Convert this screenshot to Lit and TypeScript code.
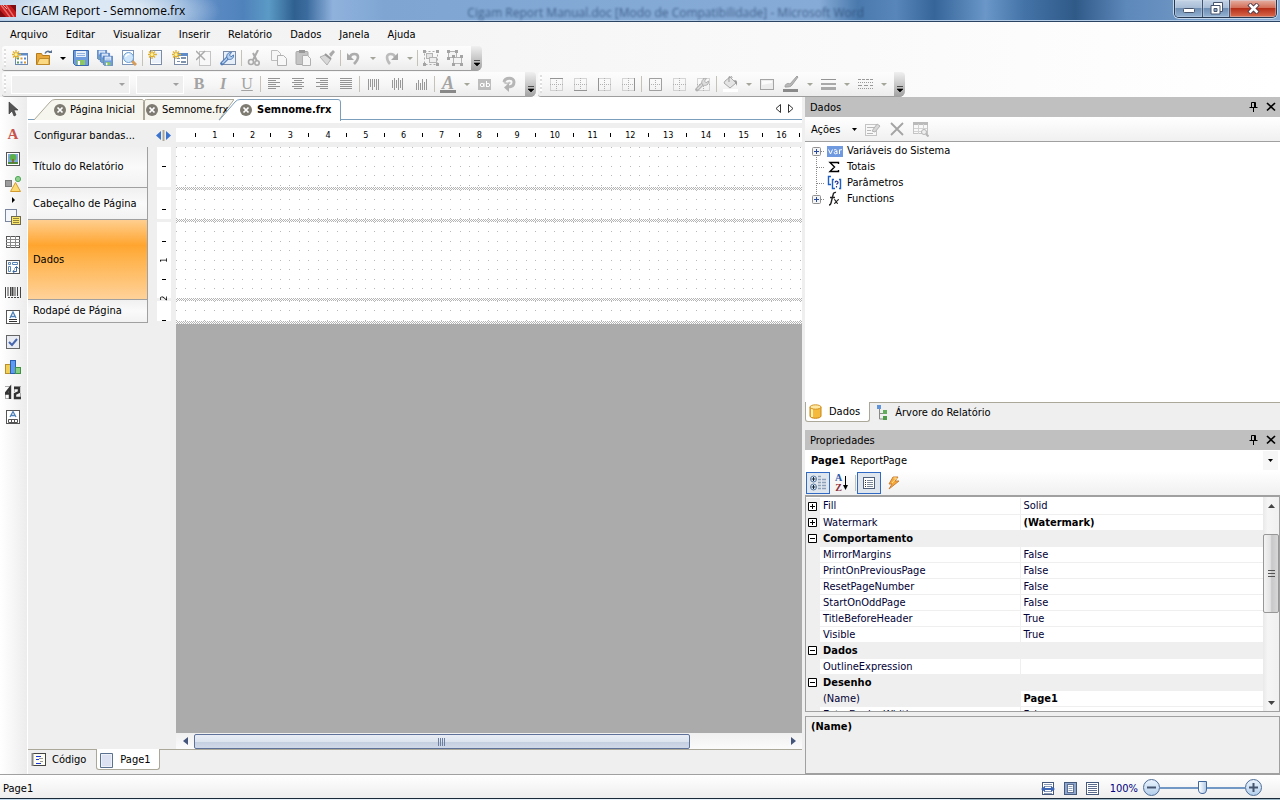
import { LitElement, html, css, svg, nothing } from "lit";
import { customElement, state } from "lit/decorators.js";

const star = svg`<path d="M4 0v9M0 4.500h9M1 1.500l6 6M7 1.500l-6 6" stroke="#e0b030" stroke-width="1.300"/><circle cx="4" cy="4.500" r="1.500" fill="#fff3a0"/>`;
const sheet = (x: number, y: number, w: number, h: number, c: string, f = "#fff") =>
  svg`<rect x=${x + 0.5} y=${y + 0.5} width=${w - 1} height=${h - 1} fill=${f} stroke=${c}/>`;
const lines = (d: string, c = "#949494", w = 1) => svg`<path d=${d} stroke=${c} stroke-width=${w} fill="none"/>`;
const G = "#b4b4b4";
const floppy = (x: number, y: number, s: number) => svg`<g transform="translate(${x} ${y}) scale(${s})">
  <path d="M.5.5h15v15h-13l-2-2z" fill="#6f9cdc" stroke="#3a68b0"/><rect x="3" y="1" width="10" height="6" fill="#e8f0fb"/>
  <path d="M4 3.500h8M4 5.500h8" stroke="#8fb2e2"/><rect x="4" y="10" width="8" height="5" fill="#8cc665"/><rect x="5" y="11" width="2" height="4" fill="#fff"/></g>`;
const dashedBox = svg`<path d="M2.500 2.500h12v12h-12zM8.500 2v13M2 8.500h13" stroke="#b0b0b0" stroke-dasharray="1 1" fill="none"/>`;
const wrench = (c1: string, c2: string) =>
  svg`<path d="M2 13.500L8 7.500" stroke=${c1} stroke-width="3.600" stroke-linecap="round"/><path d="M2.300 13.200L8.500 7" stroke=${c2} stroke-width="1.600"/><path d="M7 8c-1-3 1-6 4.500-5.500L9.500 5l1.500 1.800L13.500 5c.6 3.400-2.500 5-5 4.300z" fill=${c2} stroke=${c1}/>`;
const barTicks = (a: number[][]) => lines(a.map(([x, y1, y2]) => `M${x}.5 ${y1}V${y2}`).join(""), "#989898");

const ICONS: Record<string, unknown> = {
  newReport: svg`${sheet(3, 3, 13, 12, "#6d87b0")}<path d="M3 4.500h13" stroke="#5f8cc8" stroke-width="2"/><path d="M5 8.500h2M5 12.500h2" stroke="#54a060" stroke-width="2"/><path d="M8.500 8.500h2M12 12.500h2" stroke="#e09a30" stroke-width="2"/><path d="M12 8.500h2M8.500 12.500h2" stroke="#5a8ad0" stroke-width="2"/>${star}`,
  open: svg`<path d="M.5 14.500v-11h5l1 2h7v9z" fill="#e8a83c" stroke="#b47a1c"/><path d="M3.500 8.500h9.500v6H.8z" fill="#fbd983" stroke="#c08a28"/><path d="M9 3.500c1.500-3 4.500-2.500 5.500-1" stroke="#5b7390" fill="none" stroke-width="1.500"/><path d="M12 3h4V0z" fill="#5b7390"/>`,
  save: floppy(0, 0, 1),
  saveAll: svg`${floppy(0, 0, 0.62)}${floppy(3, 3, 0.62)}${floppy(6, 6, 0.62)}`,
  preview: svg`${sheet(1, 0, 12, 15, "#7b93b8")}<path d="M11 11l4 4" stroke="#d59c5a" stroke-width="3"/><circle cx="7.500" cy="7.500" r="5" fill="#cfe6fa" stroke="#6f9fd4"/><path d="M4.500 7a3 3 0 0 1 4-2.500" stroke="#fff" stroke-width="1.500" fill="none"/>`,
  newPage: svg`${sheet(2, 0, 12, 15, "#7b8ca8")}<rect x="4" y="2" width="9" height="11" fill="#eaf1fa"/>${star}`,
  newDialog: svg`${sheet(2, 3, 14, 12, "#7b8ca8")}<path d="M2 4.500h14" stroke="#5f8cc8" stroke-width="3"/><path d="M5 8.500h3M5 11.500h3" stroke="#7f92ac"/>${sheet(9, 7, 5, 2, "#7f92ac")}${sheet(9, 11, 5, 2, "#7f92ac")}${star}`,
  delPage: svg`${sheet(3, 1, 12, 15, "#c4c4c4", "#f8f8f8")}<path d="M0 1l9 9M9 1l-9 9" stroke="#aaa" stroke-width="1.500"/>`,
  pageSetup: svg`${sheet(3, 1, 13, 14, "#7b8ca8", "#e6eef8")}${wrench("#4f7ab4", "#b4cff0")}`,
  cut: svg`<path d="M11 0L6 10M6 3l4 8" stroke="#aaa" stroke-width="2"/><circle cx="4" cy="12" r="2.500" fill="none" stroke="#aaa" stroke-width="1.600"/><circle cx="10" cy="13" r="2.200" fill="none" stroke="#aaa" stroke-width="1.600"/>`,
  copy: svg`<path d="M.5.500h6l3 3v7h-9z" fill="#f7f7f7" stroke="#bdbdbd"/><path d="M6.500 5.500h6l3 3v7h-9z" fill="#f7f7f7" stroke="#b0b0b0"/>`,
  paste: svg`<rect x="1" y="1.500" width="12" height="13" rx="1" fill="#c4c4c4" stroke="#a8a8a8"/><rect x="4" y="0" width="6" height="3" fill="#999"/><path d="M7.500 5.500h5l3 3v7h-8z" fill="#f6f6f6" stroke="#b0b0b0"/>`,
  brush: svg`<path d="M10 4l4-4 2 2-4 5z" fill="#aaa"/><path d="M1 7l5-2 6 4-4 6z" fill="#d8d8d8" stroke="#b0b0b0"/><path d="M6 4l6 5" stroke="#999" stroke-width="2"/>`,
  undo: svg`<path d="M4 7c1-4 8-4 8 0 0 3-2 5-4 7" stroke="#acacac" stroke-width="2.600" fill="none"/><path d="M1 3v7h7z" fill="#a8a8a8"/>`,
  redo: svg`<path d="M12 7C11 3 4 3 4 7c0 3 1 5 3 7" stroke="#bcbcbc" stroke-width="2.600" fill="none"/><path d="M15 3v7H8z" fill="#a8a8a8"/>`,
  group: svg`${sheet(3, 3, 7, 6, G, "#e6e6e6")}${sheet(6, 7, 8, 6, G, "#eee")}<path d="M1.500 1.500h13v13h-13z" fill="none" stroke="#aaa" stroke-dasharray="2 2"/><path d="M0 0h3v3H0zM13 0h3v3h-3zM0 13h3v3H0zM13 13h3v3h-3z" fill="#a4a4a4"/>`,
  ungroup: svg`${sheet(1, 1, 9, 7, G, "#f4f4f4")}${sheet(6, 7, 9, 7, G, "#f4f4f4")}<path d="M0 0h3v3H0zM8 0h3v3H8zM0 7h3v3H0zM5 5h3v3H5zM13 5h3v3h-3zM5 13h3v3H5zM13 13h3v3h-3z" fill="#a4a4a4"/>`,
  left: lines("M2 2.500h12M2 4.500h8M2 6.500h12M2 8.500h8M2 10.500h12M2 12.500h8"),
  center: lines("M2 2.500h12M4 4.500h8M2 6.500h12M4 8.500h8M2 10.500h12M4 12.500h8"),
  right: lines("M2 2.500h12M6 4.500h8M2 6.500h12M6 8.500h8M2 10.500h12M6 12.500h8"),
  justify: lines("M2 2.500h12M2 4.500h12M2 6.500h12M2 8.500h12M2 10.500h12M2 12.500h12"),
  vTop: barTicks([[3, 3, 14], [5, 3, 11], [7, 3, 14], [9, 3, 11], [11, 3, 14], [13, 3, 14]]),
  vMid: barTicks([[3, 4, 12], [5, 2, 14], [7, 4, 12], [9, 2, 14], [11, 4, 12], [13, 2, 14]]),
  vBot: barTicks([[3, 7, 14], [5, 4, 14], [7, 7, 14], [9, 3, 14], [11, 6, 14], [13, 3, 14]]),
  highlight: svg`<rect x="1" y="3" width="13" height="11" fill="#bdbdbd"/><g stroke="#fff" fill="none"><circle cx="5" cy="9" r="1.700"/><path d="M7 7v4M9.500 5v6"/><circle cx="11" cy="9" r="1.700"/></g>`,
  rotate: svg`<path d="M3 6c1-5 10-5 10 0 0 4-3 5-6 5" stroke="#b6b6b6" stroke-width="3" fill="none"/><path d="M3 6c2 2 5 2 6 0" stroke="#c6c6c6" stroke-width="2" fill="none"/><path d="M8 7v9l-5-4.500z" fill="#b2b2b2"/>`,
  bTop: svg`${dashedBox}${lines("M2 2.500h13")}`,
  bBottom: svg`${dashedBox}${lines("M2 14.500h13")}`,
  bLeft: svg`${dashedBox}${lines("M2.500 2v13")}`,
  bRight: svg`${dashedBox}${lines("M14.500 2v13")}`,
  bAll: svg`${dashedBox}${lines("M2.500 2.500h12v12h-12z", "#a0a0a0")}`,
  bNone: dashedBox,
  bEdit: svg`${dashedBox}${wrench("#b0b0b0", "#dcdcdc")}`,
  fill: svg`<path d="M3 5l5-4 6 6-6 5-6-5z" fill="#e4e4e4" stroke="#a8a8a8"/><path d="M7 6V1c1-2 3-1 3 1" stroke="#999" fill="none"/><path d="M12 4c4 0 3 3 3 6z" fill="#999"/><rect x="1" y="13" width="15" height="3" fill="#fff"/>`,
  box: svg`<rect x="1.500" y="3.500" width="13" height="10" fill="#ececec" stroke="#a4a4a4"/><path d="M3 5h10v2L3 9z" fill="#fbfbfb"/>`,
  lineColor: svg`<path d="M2 11c0-4 4-4 5-3l7-8 1 1-6 8c-1 2-4 2-7 2z" fill="#b8b8b8" stroke="#a0a0a0"/><rect x="0" y="13" width="15" height="3" fill="#8a8a8a"/>`,
  lineWidth: svg`${lines("M1 3.500h15")}${lines("M1 8h15", "#a8a8a8", 2)}${lines("M1 12.500h15", "#a8a8a8", 3)}`,
  lineStyle: svg`<g stroke="#999" fill="none"><path d="M1 3.500h15" stroke-dasharray="3 1"/><path d="M1 6.500h15M1 12.500h15" stroke-dasharray="1 1"/><path d="M1 9.500h15" stroke-dasharray="4 2"/></g>`,
  pointer: svg`<path d="M4 1v12l3-3 2 5 2-1-2-5h4z" fill="#555" stroke="#333" stroke-width=".6"/>`,
  picture: svg`${sheet(1, 1, 14, 14, "#555")}<rect x="3" y="3" width="10" height="10" fill="#7fa8df"/><rect x="3" y="11" width="10" height="2" fill="#4c8a3e"/><circle cx="8" cy="6.500" r="3.400" fill="#5cb04a"/><path d="M8 8v4" stroke="#8a5a28" stroke-width="1.500"/>`,
  shapes: svg`<rect x="0.500" y="4.500" width="6" height="6" fill="#9c9c9c" stroke="#777"/><circle cx="13" cy="3" r="2.600" fill="#8fd08f" stroke="#4fa75a"/><path d="M10.500 6.500l5 9h-10z" fill="#fbdb72" stroke="#d39a30"/>`,
  subreport: svg`${sheet(0, 0, 12, 13, "#7a86a0", "#f3f6fb")}<rect x="6.500" y="7.500" width="9" height="8" fill="#fbe66c" stroke="#6d6850"/><path d="M8 9.500h6M8 11.500h6M8 13.500h6" stroke="#8f8440"/>`,
  table: svg`${sheet(1, 2, 14, 12, "#555")}<path d="M1 5.500h14M1 8.500h14M1 11.500h14M5.500 2v12M10.500 2v12" stroke="#8a8a8a"/>`,
  matrix: svg`${sheet(1, 1, 14, 14, "#555")}<path d="M3.500 3.500h2v2h-2zM7.500 3.500h5v2h-5zM3.500 7.500h2v5h-2z" fill="none" stroke="#5b86b8"/><path d="M8 12.500h3.500V8M9.500 10.500L8 12.500l1.500 2M9.500 9.500l2-2 2 2" fill="none" stroke="#39699f"/>`,
  barcode: svg`<path d="M.5 3v11M3 3v9M5.500 3v9M10 3v9M12.500 3v9M15.500 3v11" stroke="#444"/><path d="M7.500 3v9" stroke="#444" stroke-width="2"/><path d="M3 13.500h11" stroke="#444" stroke-dasharray="2 1"/>`,
  richtext: svg`${sheet(1, 1, 14, 14, "#555")}<path d="M5 9l3-6 3 6M6 7.500h4" stroke="#5082b8" fill="none" stroke-width="1.300"/><path d="M4 10.500h8M4 12.500h8" stroke="#333"/>`,
  check: svg`${sheet(1, 1, 14, 14, "#666", "#e9edf3")}<path d="M4 8l3 3 5-6" stroke="#4766ad" stroke-width="2" fill="none"/>`,
  chart: svg`<rect x=".5" y="5.500" width="5" height="9" fill="#f4cf55" stroke="#b8902a"/><rect x="5.500" y="1.500" width="5" height="13" fill="#5d9af0" stroke="#2a5fb4"/><rect x="10.500" y="8.500" width="5" height="6" fill="#86cf80" stroke="#3f8f45"/>`,
  digits: svg`<path d="M0 2.500h6M0 14.500h6M9 2.500h7M9 14.500h7M.5 9v6M9.500 3v5M15.500 9v5" stroke="#aaa"/><path d="M0 9.500h6M1 9l4-5v11" stroke="#333" stroke-width="2.400" fill="none"/><path d="M9 4h5v4l-4 2v4h6" stroke="#333" stroke-width="2.400" fill="none"/>`,
  cells: svg`${sheet(1, 1, 14, 14, "#555")}<path d="M5 8l3-5.500L11 8M6 6.500h4" stroke="#5082b8" fill="none" stroke-width="1.300"/><path d="M3.500 10.500h9v3h-9zM6.500 10v4M9.500 10v4" fill="none" stroke="#555"/>`,
  edit: svg`${sheet(0, 3, 12, 12, "#c4c4c4", "#f8f8f8")}<path d="M2 6.500h7M2 9.500h4M2 12.500h6" stroke="#b8b8b8"/><path d="M7 10l5-7 3 2-5 6z" fill="#d8d8d8" stroke="#b4b4b4"/>`,
  remove: svg`<path d="M2 2l12 12M14 2L2 14" stroke="#a4a4a4" stroke-width="1.800"/>`,
  viewData: svg`${sheet(0, 1, 15, 12, "#c4c4c4", "#f8f8f8")}<path d="M0 2.500h15" stroke="#bababa" stroke-width="3"/><path d="M1 7.500h13M1 10.500h13M5.500 3v10M10.500 3v10" stroke="#d2d2d2"/><circle cx="11" cy="11" r="2.500" fill="#eee" stroke="#b4b4b4"/><path d="M13 13l2.500 2.500" stroke="#b4b4b4" stroke-width="2"/>`,
  db: svg`<path d="M2 3v9c0 3 11 3 11 0V3z" fill="#f5b93c" stroke="#c78514"/><path d="M4 5v8" stroke="#fff0b8" stroke-width="2"/><ellipse cx="7.500" cy="3" rx="5.500" ry="2.200" fill="#fde7a2" stroke="#d29426"/>`,
  treeIcon: svg`<path d="M3.500 4v10H8M3.500 8.500H8" stroke="#888" fill="none"/><rect x="1" y="0" width="4" height="4" fill="#5f93dc"/><rect x="7" y="5" width="4" height="4" fill="#5fae5a"/><rect x="7" y="11" width="4" height="4" fill="#4d9c48"/>`,
  categ: svg`<g fill="#dfeaf8" stroke="#55759c"><circle cx="3.500" cy="4" r="3"/><circle cx="3.500" cy="12" r="3"/></g><path d="M1.500 4h4M3.500 2v4M1.500 12h4M3.500 10v4" stroke="#123"/><path d="M8 1.500h3M8 4.500h3M8 7.500h3M8 10.500h3M8 13.500h3M12 4.500h4M12 7.500h4M12 10.500h4M12 13.500h4" stroke="#8da0b8" stroke-width="1.400"/>`,
  props: svg`${sheet(2, 2, 12, 12, "#4f5f7a")}<path d="M4 5.500h1M4 7.500h1M4 9.500h1M4 11.500h1" stroke="#333"/><path d="M6 5.500h6M6 7.500h6M6 9.500h6M6 11.500h6" stroke="#7c8798"/>`,
  bolt: svg`<path d="M8 2h5l-3 4h4L4 14l3-5H4z" fill="#f8a83a" stroke="#c8803a"/><path d="M8.500 3h3L7 8" stroke="#ffe08a" fill="none"/>`,
  code: svg`${sheet(1, 1, 14, 13, "#444", "#fdfdf4")}<path d="M1.500 1v13" stroke="#888" stroke-width="2"/><path d="M5 4.500h5M5 7.500h3M5 11.500h5" stroke="#1a35d8"/><path d="M8 6.500h4M9 9.500h3" stroke="#999"/>`,
  page: svg`<path d="M1.500 1.500h12v14h-12z" fill="#eef1f8" stroke="#5b7190"/><path d="M3 3h9v11H3z" fill="#dce2f1"/>`,
  fitWidth: svg`${sheet(2, 2, 12, 13, "#45597c")}<path d="M4 4.500h8M4 6.500h8M4 11.500h8M4 13.500h8" stroke="#8b9bb5"/><path d="M1 9l4-3v2h6V6l4 3-4 3v-2H5v2z" fill="#3d67b6"/>`,
  wholePage: svg`${sheet(2, 2, 13, 13, "#45597c", "#8fa7cc")}${sheet(5, 4, 7, 9, "#5d7091")}<path d="M6.500 6.500h4M6.500 8.500h4M6.500 10.500h4" stroke="#90a0b8"/>`,
  fullSize: svg`${sheet(2, 2, 13, 13, "#45597c")}<path d="M4 4.500h9M4 6.500h9M4 8.500h9M4 10.500h9M4 12.500h9" stroke="#5b6c8c"/>`,
  closeTab: svg`<circle cx="8" cy="8" r="6" fill="#7e7b72"/><path d="M5.500 5.500l5 5M10.500 5.500l-5 5" stroke="#fff" stroke-width="1.700"/>`,
  pin: svg`<path d="M6.500 3.500h4v5h-4zM4.500 8.500h8M8.500 9v4" stroke="#000" fill="none"/><path d="M9.500 4v4" stroke="#000"/>`,
  close: svg`<path d="M4 4l8 7.500M12 4L4 11.500" stroke="#000" stroke-width="1.700"/>`,
  sigma: svg`<path d="M11.500 5V3.500H3L7.500 8 3 12.500h8.500V11" stroke="#000" stroke-width="1.400" fill="none"/>`,
  param: svg`<path d="M4 1.500H1.500v8H4M7 4.500H5.500v9H8M12 4.500h1.500v9H12" stroke="#1d5fc4" stroke-width="1.400" fill="none"/><path d="M8 7.500c.5-2 3.500-1.500 3 .5L9.500 9.500M9.500 11v1.500" stroke="#28348c" stroke-width="1.200" fill="none"/>`,
  fx: svg`<path d="M2 14c2 0 2-2 2.500-4L6 4c.4-2 1.500-3 3-2.500M3 6.500h5" stroke="#222" stroke-width="1.400" fill="none"/><path d="M7 8.500c2 0 2 4 4 4M12 8.500c-2 0-3 4-5 4" stroke="#222" stroke-width="1.200" fill="none"/>`,
  variable: svg`<rect x="0" y="3" width="16" height="11" fill="#6f9ae0"/><path d="M1.500 6.500L3.500 11l2-4.500M7 7c3-1 3 0 3 4M10 8.500c-3-.5-3.500 2-2 2.300 1 .2 2-.3 2-1M12.500 11V6.500M12.500 8c.5-1.500 1.500-1.500 2.500-1.200" stroke="#fff" fill="none"/>`,
};

const icon = (n: string) => html`<svg class="ic" width="16" height="16" viewBox="0 0 16 16" fill="none" aria-hidden="true">${ICONS[n]}</svg>`;

const base = css`
  * { box-sizing: border-box; }
  button { font: inherit; color: inherit; border: 0; background: none; padding: 0; margin: 0; display: flex; align-items: center; justify-content: center; white-space: nowrap; }
  .ic { display: block; flex: none; }
`;

type Item = [string, string?];

@customElement("tool-strip")
class ToolStrip extends LitElement {
  static properties = { items: { attribute: false } };
  declare items: Item[];
  static styles = [base, css`
    :host { display: flex; height: 25px; align-items: center; background: linear-gradient(#fdfdfd, #f7f7f7 50%, #ececec); border-bottom: 1px solid #9d9d9d; border-radius: 3px 6px 6px 3px; }
    .grip { width: 2px; height: 18px; margin: 0 2px; background: repeating-linear-gradient(#dedede 0 2px, #fff 2px 4px); }
    .btn { width: 24px; height: 22px; }
    .drop { width: 13px; height: 22px; }
    .sep { width: 1px; height: 16px; margin: 0 1px; background: #c5c2b8; }
    .cap { width: 11px; height: 25px; margin-left: 4px; background: linear-gradient(#f0f0f0, #a0a0a0); border-radius: 0 4px 6px 0; align-items: flex-end; padding-bottom: 5px; }
    .combo { appearance: none; height: 19px; margin: 0 3px; border: 1px solid #fff; border-radius: 0; background: #efefef; font: inherit; opacity: 1; }
    .wide { width: 119px; } .narrow { width: 48px; }
    .holder { display: grid; align-items: center; }
    .holder > * { grid-area: 1 / 1; }
    .holder svg { justify-self: end; margin-right: 8px; }
    .glyph { font: bold 16px "Liberation Serif", serif; color: #a3a3a3; line-height: 16px; }
    .italic { font-style: italic; } .under { text-decoration: underline; font-weight: normal; }
    .color { font-style: italic; border-bottom: 3px solid #888; width: 16px; text-align: center; line-height: 14px; font-size: 18px; }
  `];
  one([k, v]: Item) {
    const tri = (c: string) => html`<svg width="6" height="3" viewBox="0 0 6 3"><path d="M0 0h6L3 3z" fill=${c} /></svg>`;
    if (k === "sep") return html`<span class="sep"></span>`;
    if (k === "drop") return html`<button class="drop" aria-label="Mais opções">${tri(v ?? "#a5a59a")}</button>`;
    if (k === "combo") return html`<span class="holder"><select class="combo ${v!}" aria-label=${v === "wide" ? "Fonte" : "Tamanho"} disabled></select>${tri("#a0a0a0")}</span>`;
    if (k === "glyph") return html`<button class="btn"><span class="glyph ${v!}">${v === "bold" ? "B" : v === "italic" ? "I" : v === "under" ? "U" : "A"}</span></button>`;
    return html`<button class="btn" aria-label=${k}>${icon(k)}</button>`;
  }
  render() {
    return html`<span class="grip"></span>${this.items.map((i) => this.one(i))}
      <button class="cap" aria-label="Opções da barra"><svg width="6" height="6" viewBox="0 0 6 6"><path d="M0 .5h6M0 3h6L3 6z" stroke="#000" stroke-width=".6" /></svg></button>`;
  }
}

const l = (s: string): Item[] => s.split(" ").map((t) => t.split(":") as unknown as Item);
const STANDARD = l("newReport open drop:#000 save saveAll preview sep newPage newDialog delPage pageSetup sep cut copy paste brush sep undo drop redo drop sep group ungroup");
const TEXT = l("combo:wide combo:narrow glyph:bold glyph:italic glyph:under sep left center right justify sep vTop vMid vBot sep glyph:color drop highlight rotate");
const BORDER = l("bTop bBottom bLeft bRight sep bAll bNone bEdit sep fill drop box lineColor drop lineWidth drop lineStyle drop");
const MENU = ["Arquivo", "Editar", "Visualizar", "Inserir", "Relatório", "Dados", "Janela", "Ajuda"];
const SIDE = ["pointer", "text", "picture", "shapes", "more", "subreport", "table", "matrix", "barcode", "richtext", "check", "chart", "digits", "cells"];
const BANDS = [
  { name: "Título do Relatório", cls: "b1", marks: 0 },
  { name: "Cabeçalho de Página", cls: "b2", marks: 0 },
  { name: "Dados", cls: "b3", marks: 2 },
  { name: "Rodapé de Página", cls: "b4", marks: 0 },
];
const PROPS: [string, string, string][] = [
  ["plus", "Fill", "Solid"], ["plus", "Watermark", "(Watermark)"], ["group", "Comportamento", ""],
  ["", "MirrorMargins", "False"], ["", "PrintOnPreviousPage", "False"], ["", "ResetPageNumber", "False"],
  ["", "StartOnOddPage", "False"], ["", "TitleBeforeHeader", "True"], ["", "Visible", "True"],
  ["group", "Dados", ""], ["", "OutlineExpression", ""], ["group", "Desenho", ""],
  ["sel", "(Name)", "Page1"], ["", "ExtraDesignWidth", "False"],
];
const TREE: [string, string, boolean][] = [["variable", "Variáveis do Sistema", true], ["sigma", "Totais", false], ["param", "Parâmetros", false], ["fx", "Functions", true]];
const dots = Array.from({ length: 20 }, (_, i) => Math.round(i * 9.45));
const CHROME_WIDTH = 654;
const PX_PER_CM = 96 / 2.54;

@customElement("app-root")
class AppRoot extends LitElement {
  @state() selected = "Dados";
  @state() centimetres = 0;
  static styles = [base, css`
    :host { display: flex; flex-direction: column; height: 100vh; overflow: hidden; background: #efefef; color: #000; font: 11px/16px "DejaVu Sans Condensed", "DejaVu Sans", sans-serif; cursor: default; }
    .title { flex: none; display: flex; height: 22px; align-items: flex-start; border-bottom: 1px solid #2c4464; box-shadow: inset 0 -1px #b4cbe6;
      background: radial-gradient(ellipse 130px 34px at 90px 11px, #dce8f4 0 40%, #dce8f400 100%), linear-gradient(90deg, #a9c2e0, #84abd8 13%, #5a89c2 17%, #4f82bb 19%, #5b9ac6 21%, #2f608f 23%, #3c6c9f 24%, #8fb2dc 26%, #7fa6d3 30%, #86abd6 64%, #4a79ad 67%, #5886ba 70%, #36659a 73%, #6a97c8 77%, #4473a8 80%, #2f5a88 84%, #5d88ba 88%, #89acd4); }
    .logo { margin-top: 5px; }
    .caption { font: 12px/20px "Open Sans", "Noto Sans", sans-serif; margin-left: 5px; padding-top: 1px; white-space: nowrap; }
    .ghost { flex: 1; text-align: center; font: 12px/20px "Open Sans", "Noto Sans", sans-serif; padding-top: 3px; padding-right: 28px; color: #24436c; filter: blur(1px); opacity: .7; white-space: nowrap; overflow: hidden; }
    .winbtns { display: flex; margin-right: 3px; border: 1px solid #26384f; border-top: 0; border-radius: 0 0 5px 5px; overflow: hidden; box-shadow: 0 0 0 1px #c5d8ec; }
    .winbtns button { width: 28px; height: 17px; background: linear-gradient(#c3d3e6, #a8bdd6 45%, #6f8fb4 50%, #93b2d3); border-right: 1px solid #40546f; box-shadow: inset 0 0 0 1px #d5e2f066; }
    .winbtns .max { width: 27px; }
    .winbtns .x { width: 46px; border: 0; background: linear-gradient(#e6b0a2, #d3705a 45%, #b62f19 50%, #d96a4c); }
    .top { flex: none; background: linear-gradient(90deg, #f0f0f0, #fff); }
    .menu { display: flex; height: 24px; align-items: center; padding-left: 2px; }
    .menu button { padding: 2px 8px 0; margin-right: 2px; height: 20px; }
    .strips { display: flex; gap: 2px; padding-left: 2px; }
    .strips + .strips { margin-top: 1px; }
    .main { flex: 1; min-height: 0; display: grid; grid-template-columns: 28px minmax(0, 1fr) 475px; border-bottom: 1px solid #a0a0a0; }
    .side { background: linear-gradient(90deg, #fff, #f6f6f6 50%, #ececec); border-right: 1px solid #fff; }
    .side button { width: 26px; height: 25px; }
    .side button:first-child { height: 24px; }
    .side .more { height: 8px; }
    .serifA { font: bold 15px/16px "Liberation Serif", serif; color: #c8524c; }
    .center { display: flex; flex-direction: column; min-width: 0; border-right: 3px solid #efefef; }
    .tabs { flex: none; display: flex; height: 23px; padding: 2px 8px 0 6px; background: #fff; border-bottom: 1px solid #7b9ebd; }
    .tab { position: relative; height: 21px; justify-content: flex-start; isolation: isolate; }
    .tab > .shape { position: absolute; inset: 0; z-index: -1; }
    .tab > span { padding-top: 1px; }
    .t1 { width: 110px; padding-left: 18px; gap: 2px; } .t2 { width: 90px; gap: 2px; } .t3 { width: 122px; margin-left: -15px; padding-left: 19px; gap: 3px; font-weight: bold; }
    .arrows { margin-left: auto; display: flex; gap: 7px; align-items: center; height: 18px; }
    .under-tabs { flex: none; height: 3px; background: #fff; }
    .head { flex: none; display: flex; height: 24px; align-items: center; }
    .config { width: 128px; justify-content: flex-start; padding: 1px 0 0 6px; }
    .split { width: 15px; }
    .ruler { flex: 1; min-width: 0; margin-left: 5px; height: 14px; background: #fff; display: flex; overflow: hidden; padding-left: 0.5cm; font-size: 9px; line-height: 14px; }
    .cm { flex: none; width: 1cm; height: 14px; display: flex; align-items: center; }
    .cm::before { content: ""; width: 1px; height: 4px; background: #000; }
    .cm span { flex: 1; text-align: center; padding-left: 1px; }
    .work { flex: 1; min-height: 0; display: grid; grid-template-columns: 120px 9px 14px 5px minmax(0, 1fr); }
    .band { width: 100%; justify-content: flex-start; padding-left: 5px; border-right: 1px solid #a0a0a0; border-bottom: 1px solid #a0a0a0; background: linear-gradient(#f0f0f0, #fafafa 50%, #f2f2f2); }
    .band.b1 { height: 41px; } .band.b2 { height: 32px; } .band.b3 { height: 80px; } .band.b4 { height: 23px; }
    .band.on { background: linear-gradient(#ffcf90, #ffa52f 32%, #ffb045 45%, #ffd29a); }
    .vr { grid-column: 3; }
    .seg { border-bottom: 3px solid #efefef; background: #fff; padding-top: 0.5cm; }
    .vcm { height: 1cm; display: flex; flex-direction: column; align-items: center; font-size: 9px; }
    .vcm::before { content: ""; width: 4px; height: 1px; background: #000; flex: none; }
    .vcm span { flex: 1; writing-mode: vertical-rl; transform: rotate(180deg); line-height: 12px; text-align: center; }
    .r.b1 { height: 43px; } .r.b2 { height: 32px; } .r.b3 { height: 79px; } .r.b4 { height: 23px; }
    .canvas { grid-column: 5; background: #ababab; display: flex; flex-direction: column; min-width: 0; }
    .area { display: flex; flex-direction: column; background: #fff; }
    .area svg { flex: 1; width: 100%; min-height: 0; display: block; }
    .area::after { content: ""; height: 3px; background: repeating-conic-gradient(#b4b4b4 0 25%, #fff 0 50%) 0 0 / 2px 2px; }
    .hscroll { margin-top: auto; height: 16px; display: flex; align-items: center; background: linear-gradient(#f0f0f0, #fbfbfb); }
    .hscroll .arrow { width: 18px; height: 16px; }
    .htrack { flex: 1; height: 16px; }
    .hthumb { width: 84%; height: 15px; margin-top: 1px; border: 1px solid #5d7199; border-radius: 2px; background: linear-gradient(#e8edf5, #dde4ee 50%, #c3cedf 52%, #d0d9e8); display: grid; place-items: center; }
    .pages { flex: none; display: flex; height: 25px; border-top: 1px solid #aca899; }
    .pages button { gap: 5px; height: 21px; margin-top: -1px; padding: 1px 10px 0 3px; }
    .pages .on { background: #fff; border: 1px solid #aca899; border-top: 0; border-radius: 0 0 3px 3px; padding: 1px 8px 0 2px; }
    .right { display: flex; flex-direction: column; min-width: 0; min-height: 0; }
    .phead { flex: none; display: flex; align-items: center; height: 20px; background: #c0c0c0; padding-left: 5px; }
    .phead span { flex: 1; padding-top: 1px; }
    .phead button { width: 18px; }
    .ptools { flex: none; display: flex; height: 25px; align-items: center; background: linear-gradient(#fff, #f0f0f0); border-bottom: 1px solid #a0a0a0; padding-left: 6px; }
    .ptools button { width: 24px; height: 22px; }
    .ptools .acts { width: auto; gap: 12px; margin-right: 4px; padding-top: 1px; }
    .tree { flex: none; list-style: none; margin: 0; padding: 1px 0 0 7px; background: #fff; height: 260px; }
    .tree li { display: flex; align-items: center; height: 16px; gap: 4px; }
    .tree .ic { margin-left: -1px; }
    .node { display: block; }
    .dtabs { flex: none; display: flex; height: 28px; }
    .dtabs button { gap: 5px; height: 20px; padding: 0 10px 0 3px; }
    .dtabs .on { background: #fff; border: 1px solid #aca899; border-top: 0; border-radius: 0 0 3px 3px; padding: 0 9px 0 2px; }
    .dtabs .off { border-top: 1px solid #aca899; flex: 1; justify-content: flex-start; height: 21px; padding-left: 6px; gap: 3px; }
    .obj { flex: none; height: 21px; display: flex; align-items: center; background: #fff; padding: 0 2px 0 6px; }
    .obj button { width: 15px; height: 19px; background: #f6f6f6; margin-left: auto; }
    .obj b { margin-right: 5px; }
    .gtools { flex: none; display: flex; height: 26px; align-items: center; background: linear-gradient(#fff, #f0f0f0); border-bottom: 2px solid #a0a0a0; padding-left: 1px; }
    .gtools button { width: 24px; height: 22px; }
    .gtools .on { background: #e0e6ee; border: 1px solid #316ac5; }
    .gtools .sep { width: 1px; height: 16px; background: #c5c2b8; margin: 0 1px; }
    .az { display: grid; font: bold 10px/10px "Liberation Serif", serif; color: #2b57a8; } .az i { font-style: normal; color: #8e2f38; }
    .grid { flex: 1; min-height: 0; overflow: hidden; display: flex; border: 1px solid #a0a0a0; border-top: 0; background: #fff; }
    table { flex: 1; border-collapse: collapse; table-layout: fixed; align-self: flex-start; margin-top: 1px; }
    th, td { height: 16px; padding: 0 3px; font-weight: normal; text-align: left; line-height: 15px; border-bottom: 1px solid #efefef; white-space: nowrap; overflow: hidden; }
    .g { width: 14px; background: #efefef; padding: 0 0 0 2px; border: 0; } .n { width: 200px; color: #000035; }
    .v { border-left: 1px solid #efefef; color: #000035; padding-left: 3px; }
    .cat th { background: #efefef; font-weight: bold; color: #000; }
    .sel .n { background: #efefef; } .strong { font-weight: bold; color: #000; }
    .vscroll { width: 16px; background: linear-gradient(90deg, #e9e9e9, #f5f5f5 30%, #f0f0f0); display: grid; grid-template-rows: 17px 20px 79px 1fr 17px; }
    .vscroll button { width: 16px; }
    .vthumb { grid-row: 3; border: 1px solid #979797; border-radius: 2px; background: linear-gradient(90deg, #f3f3f3, #e3e3e3 45%, #c8c8ca 55%, #d8d8d8); display: grid; place-items: center; }
    .down { grid-row: 5; }
    .desc { flex: none; height: 58px; margin-top: 4px; border: 1px solid #a0a0a0; padding: 2px 5px; font-weight: bold; }
    .status { flex: none; display: flex; align-items: center; height: 23px; padding: 2px 18px 0 3px; background: linear-gradient(#fff, #eee); }
    .status .name { flex: 1; padding-top: 2px; }
    .status .view { width: 22px; height: 20px; }
    .status .pct { margin: 0 5px 0 7px; padding-top: 2px; color: #000080; }
    .status .round { width: 17px; height: 17px; border: 1px solid #4d6c96; border-radius: 9px; background: linear-gradient(#eaf3fd, #b4cfec); }
    .zoom { appearance: none; background: none; margin: 0; width: 85px; height: 17px; }
    .zoom::-webkit-slider-runnable-track { height: 2px; background: #7298c6; }
    .zoom::-webkit-slider-thumb { appearance: none; width: 9px; height: 13px; margin-top: -6px; border: 1px solid #41679c; background: linear-gradient(90deg, #fff, #b4cbe8); border-radius: 1px 1px 5px 5px; }
    .edge { flex: none; height: 2px; background: linear-gradient(90deg, #c5dbee 60px, #e8f2fa 60px 960px, #9fb8c8 960px); border-top: 1px solid #1b2a38; }
  `];

  measure = () => { this.centimetres = Math.floor((window.innerWidth - CHROME_WIDTH) / PX_PER_CM); };
  connectedCallback() {
    super.connectedCallback();
    this.measure();
    window.addEventListener("resize", this.measure);
  }
  disconnectedCallback() {
    super.disconnectedCallback();
    window.removeEventListener("resize", this.measure);
  }

  box(open: boolean) {
    return html`<svg class="ic" width="9" height="15" viewBox="0 0 9 15"><path d="M.5 3.500h8v8h-8z" fill="#fff" stroke="#000" /><path d="M2 7.500h5${open ? "" : "M4.500 5v5"}" stroke="#000" /></svg>`;
  }
  panelHead(t: string) {
    return html`<div class="phead"><span>${t}</span><button aria-label="Fixar">${icon("pin")}</button><button aria-label="Fechar">${icon("close")}</button></div>`;
  }
  tri(d: string, c = "#000", w = 6, h = 6) {
    return html`<svg width=${w} height=${h} viewBox="0 0 ${w} ${h}"><path d=${d} fill=${c} /></svg>`;
  }
  render() {
    return html`
      <header class="title">
        <svg class="logo" width="16" height="12" viewBox="0 0 16 12"><rect width="16" height="12" fill="#c41c1c" /><path d="M1 0l9 12M6 0l8 12" stroke="#e86a6a" stroke-width="1.500" /><path d="M0 5l6 7H0zM10 0l6 7V0z" fill="#7e0c10" /><path d="M3 0l4 4" stroke="#f4b0b0" stroke-width="1" /></svg>
        <span class="caption">CIGAM Report - Semnome.frx</span>
        <span class="ghost">Cigam Report Manual.doc [Modo de Compatibilidade] - Microsoft Word</span>
        <div class="winbtns">
          <button aria-label="Minimizar"><svg width="12" height="12"><rect x=".5" y="5.500" width="11" height="4" rx="1" fill="#fff" stroke="#47536a" /></svg></button>
          <button class="max" aria-label="Restaurar"><svg width="13" height="13"><path d="M3.500.5h9v9h-9z" fill="#fff" stroke="#47536a" /><path d="M1 3.500h9v8.500H1z" fill="#fff" stroke="#47536a" /><path d="M4 6.500h3v3H4z" fill="#8aa5c6" stroke="#47536a" /></svg></button>
          <button class="x" aria-label="Fechar"><svg width="13" height="11" viewBox="0 0 13 11"><path d="M2 1l9 9M11 1L2 10" stroke="#4f3a48" stroke-width="4.500" /><path d="M2.500 1.500l8 8M10.500 1.500l-8 8" stroke="#fff" stroke-width="2.500" /></svg></button>
        </div>
      </header>
      <div class="top">
        <nav class="menu">${MENU.map((m) => html`<button>${m}</button>`)}</nav>
        <div class="strips"><tool-strip .items=${STANDARD}></tool-strip></div>
        <div class="strips"><tool-strip .items=${TEXT}></tool-strip><tool-strip .items=${BORDER}></tool-strip></div>
      </div>
      <div class="main">
        <div class="side">${SIDE.map((s) => s === "more" ? html`<button class="more" aria-label="Mais formas">${this.tri("M2 0l3 3-3 3z")}</button>`
          : s === "text" ? html`<button class="serifA">A</button>` : html`<button aria-label=${s}>${icon(s)}</button>`)}</div>
        <div class="center">
          <div class="tabs">
            <button class="tab t1"><svg class="shape" width="110" height="21"><path d="M0 21L16 3q2-2.500 5-2.500h87.500q1 0 1 2V21" fill="#f6f5ee" stroke="#aca899" /></svg>${icon("closeTab")}<span>Página Inicial</span></button>
            <button class="tab t2"><svg class="shape" width="90" height="21"><path d="M.5 21V2q0-1.500 2-1.500H90L75 21" fill="#f6f5ee" stroke="#aca899" /></svg>${icon("closeTab")}<span>Semnome.frx</span></button>
            <button class="tab t3"><svg class="shape" width="122" height="22"><path d="M0 21.500L16 3q2-2.500 5-2.500h98q2.500 0 2.500 2.500V22" fill="#fff" stroke="#7b9ebd" /></svg>${icon("closeTab")}<span>Semnome.frx</span></button>
            <div class="arrows">
              <button aria-label="Anterior"><svg width="6" height="9"><path d="M5.500.5v8l-4.500-4z" fill="none" stroke="#333" /></svg></button>
              <button aria-label="Próxima"><svg width="6" height="9"><path d="M.5.5v8l4.500-4z" fill="none" stroke="#333" /></svg></button>
            </div>
          </div>
          <div class="under-tabs"></div>
          <div class="head">
            <button class="config">Configurar bandas...</button>
            <button class="split" aria-label="Ajustar largura"><svg width="15" height="11"><path d="M5 1v9L0 5.500zM10 1v9l5-4.500z" fill="#3a74d0" /><path d="M7.500 0v11" stroke="#aca899" stroke-width="2" /></svg></button>
            <div class="ruler">${Array.from({ length: this.centimetres + 1 }, (_, i) => html`<div class="cm">${i < this.centimetres ? html`<span>${i + 1}</span>` : nothing}</div>`)}</div>
          </div>
          <div class="work">
            <div>${BANDS.map((b) => html`<button class="band ${b.cls} ${b.name === this.selected ? "on" : ""}" @click=${() => (this.selected = b.name)}>${b.name}</button>`)}</div>
            <div class="vr">${BANDS.map((b) => html`<div class="seg r ${b.cls}"><div class="vcm">${b.marks ? html`<span>1</span>` : nothing}</div>${b.marks ? html`<div class="vcm"><span>2</span></div>` : nothing}</div>`)}</div>
            <div class="canvas">
              ${BANDS.map((b) => html`<div class="area r ${b.cls}"><svg><defs><pattern id="dots" width="189" height="189" patternUnits="userSpaceOnUse">${dots.map((y) => dots.map((x) => svg`<rect x=${x} y=${y} width="1" height="1" fill="#b8b8b8"/>`))}</pattern></defs><rect width="100%" height="100%" fill="url(#dots)" /></svg></div>`)}
              <div class="hscroll">
                <button class="arrow" aria-label="Rolar à esquerda">${this.tri("M5 0v8L0 4z", "#44557c", 5, 8)}</button>
                <div class="htrack"><div class="hthumb"><svg width="8" height="8"><path d="M.5 0v8M2.500 0v8M4.500 0v8M6.500 0v8" stroke="#6d7f9f" /></svg></div></div>
                <button class="arrow" aria-label="Rolar à direita">${this.tri("M0 0v8l5-4z", "#44557c", 5, 8)}</button>
              </div>
            </div>
          </div>
          <div class="pages"><button>${icon("code")}Código</button><button class="on">${icon("page")}Page1</button></div>
        </div>
        <div class="right">
          ${this.panelHead("Dados")}
          <div class="ptools"><button class="acts">Ações ${this.tri("M0 0h5L2.500 3z", "#000", 5, 3)}</button><button aria-label="Editar">${icon("edit")}</button><button aria-label="Excluir">${icon("remove")}</button><button aria-label="Ver dados">${icon("viewData")}</button></div>
          <ul class="tree">${TREE.map(([i, t, exp], n) => html`<li><svg class="node" width="12" height="16"><path d="M4.500 ${n ? 0 : 8}V${n < 3 ? 16 : 8}M5 8.500h7" stroke="#888" stroke-dasharray="1 1" />${exp ? svg`<rect x=".5" y="4.500" width="8" height="8" rx="1" fill="#f4f4f4" stroke="#919191"/><path d="M2 8.500h5M4.500 6v5" stroke="#2a4a9a"/>` : nothing}</svg>${icon(i)}<span>${t}</span></li>`)}</ul>
          <div class="dtabs"><button class="on">${icon("db")}Dados</button><button class="off">${icon("treeIcon")}Árvore do Relatório</button></div>
          ${this.panelHead("Propriedades")}
          <div class="obj"><b>Page1</b>ReportPage<button aria-label="Escolher objeto">${this.tri("M0 0h5L2.500 3z", "#000", 5, 3)}</button></div>
          <div class="gtools">
            <button class="on" aria-label="Categorias">${icon("categ")}</button>
            <button aria-label="Ordem alfabética"><span class="az">A<i>Z</i></span><svg width="7" height="14"><path d="M3.500 0v12" stroke="#000" /><path d="M1 9h5l-2.500 5z" /></svg></button>
            <span class="sep"></span><button class="on" aria-label="Propriedades">${icon("props")}</button><button aria-label="Eventos">${icon("bolt")}</button>
          </div>
          <div class="grid">
            <table>
              <colgroup><col class="g" /><col class="n" /><col /></colgroup>
              ${PROPS.map(([k, n, v]) => k === "group"
                ? html`<tr class="cat"><td class="g">${this.box(true)}</td><th colspan="2">${n}</th></tr>`
                : html`<tr class=${k}><td class="g">${k === "plus" ? this.box(false) : nothing}</td><th class="n">${n}</th><td class="v ${v === "Page1" || v === "(Watermark)" ? "strong" : ""}">${v}</td></tr>`)}
            </table>
            <div class="vscroll">
              <button aria-label="Rolar acima">${this.tri("M0 4l3.500-4L7 4z", "#444", 7, 4)}</button>
              <div class="vthumb"><svg width="7" height="8"><path d="M0 .5h7M0 3.500h7M0 6.500h7" stroke="#555" /></svg></div>
              <button class="down" aria-label="Rolar abaixo">${this.tri("M0 0h7L3.500 4z", "#444", 7, 4)}</button>
            </div>
          </div>
          <div class="desc">(Name)</div>
        </div>
      </div>
      <footer class="status">
        <span class="name">Page1</span>
        <button class="view" aria-label="Largura da página">${icon("fitWidth")}</button><button class="view" aria-label="Página inteira">${icon("wholePage")}</button><button class="view" aria-label="Tamanho real">${icon("fullSize")}</button>
        <label class="pct" for="zoom">100%</label>
        <button class="round" aria-label="Reduzir"><svg width="9" height="9"><path d="M0 4.500h9" stroke="#44546e" stroke-width="2" /></svg></button>
        <input class="zoom" id="zoom" type="range" min="0" max="200" value="100" />
        <button class="round" aria-label="Ampliar"><svg width="9" height="9"><path d="M0 4.500h9M4.500 0v9" stroke="#44546e" stroke-width="2" /></svg></button>
      </footer>
      <div class="edge"></div>`;
  }
}
